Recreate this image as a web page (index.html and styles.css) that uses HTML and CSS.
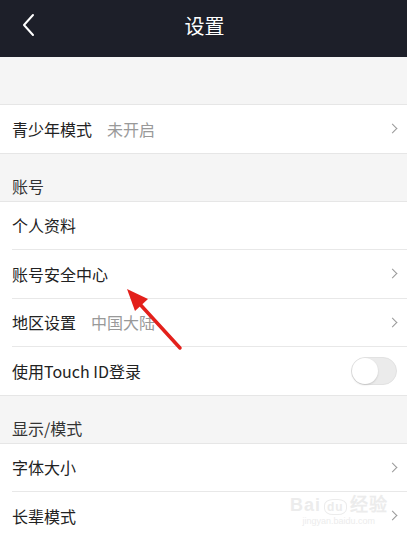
FILE: index.html
```html
<!DOCTYPE html>
<html lang="zh-CN">
<head>
	<meta charset="UTF-8" />
	<meta name="viewport" content="width=device-width, initial-scale=1" />
	<title>设置</title>
	<link rel="stylesheet" href="styles.css">
</head>
<body>
	<div class="page">
		<div class="header">
			<svg class="back" width="14" height="24" viewBox="0 0 14 24">
				<path d="M11 2 L2 12 L11 22" fill="none" stroke="#fff" stroke-width="2" stroke-linecap="round" stroke-linejoin="round" />
			</svg>
			<div class="header_title">设置</div>
		</div>

		<div class="gap"></div>

		<div class="group">
			<div class="row">
				<div class="row_label">青少年模式</div>
				<div class="row_value">未开启</div>
				<span class="chevron"></span>
			</div>
		</div>

		<div class="section">账号</div>
		<div class="group">
			<div class="row">
				<div class="row_label">个人资料</div>
			</div>
			<div class="row">
				<div class="row_label">账号安全中心</div>
				<span class="chevron"></span>
			</div>
			<div class="row">
				<div class="row_label">地区设置</div>
				<div class="row_value">中国大陆</div>
				<span class="chevron"></span>
			</div>
			<div class="row">
				<div class="row_label">使用Touch ID登录</div>
				<span class="switch"><span class="knob"></span></span>
			</div>
		</div>

		<div class="section">显示/模式</div>
		<div class="group">
			<div class="row">
				<div class="row_label">字体大小</div>
				<span class="chevron"></span>
			</div>
			<div class="row">
				<div class="row_label">长辈模式</div>
				<span class="chevron"></span>
			</div>
		</div>

		<!-- annotation arrow drawn over the screenshot -->
		<svg class="arrow" width="407" height="540" viewBox="0 0 407 540">
			<line x1="180" y1="348" x2="137" y2="301" stroke="#e3201b" stroke-width="3.5" stroke-linecap="round" />
			<polygon points="127,289 148,299 135,311" fill="#e3201b" />
		</svg>

		<div class="watermark">
			<div class="wm_logo">Bai<span class="wm_du">du</span>经验</div>
			<div class="wm_url">jingyan.baidu.com</div>
		</div>
	</div>
</body>
</html>
```

FILE: styles.css
```css
body{
	margin: 0;
	font-family: "Noto Sans CJK SC", "Noto Sans", sans-serif;
	background-color: #f5f5f5;
}

.page{
	position: relative;
	width: 407px;
	height: 540px;
	overflow: hidden;
}

.header{
	height: 57px;
	background-color: #1d1f29;
	display: flex;
	align-items: center;
	justify-content: center;
	position: relative;
}

.back{
	position: absolute;
	left: 22px;
	top: 13px;
}

.header_title{
	color: #fff;
	font-size: 20px;
	margin-top: -6px;
	margin-left: 2px;
}

.gap{
	height: 47px;
}

.group{
	background-color: #fff;
	border-top: 1px solid #e6e6e6;
	border-bottom: 1px solid #e6e6e6;
}

.row{
	box-sizing: border-box;
	height: 48.5px;
	margin-left: 12px;
	padding-right: 11px;
	display: flex;
	align-items: center;
	border-bottom: 1px solid #e8e8e8;
	font-size: 16px;
	color: #222;
}

.row:last-child{
	border-bottom: none;
	height: 47.5px;
}

.row_value{
	color: #999;
	margin-left: 15px;
}

.chevron{
	margin-left: auto;
	width: 6px;
	height: 6px;
	border-top: 1.5px solid #999;
	border-right: 1.5px solid #999;
	transform: rotate(45deg);
}

.switch{
	margin-left: auto;
	margin-right: -1px;
	width: 46px;
	height: 28px;
	box-sizing: border-box;
	border-radius: 14px;
	background-color: #ebebeb;
	border: 1px solid #e2e2e2;
	position: relative;
}

.knob{
	position: absolute;
	left: 0;
	top: 0;
	width: 26px;
	height: 26px;
	border-radius: 50%;
	background-color: #fff;
	box-shadow: 0 1px 2px rgba(0,0,0,0.15);
}

.section{
	box-sizing: border-box;
	height: 47px;
	padding: 0 12px 3px;
	display: flex;
	align-items: flex-end;
	font-size: 16px;
	color: #333;
}

.arrow{
	position: absolute;
	left: 0;
	top: 0;
}

.watermark{
	position: absolute;
	left: 290px;
	top: 490px;
	color: #ececec;
	font-family: "Liberation Sans", sans-serif;
	text-align: center;
}

.wm_logo{
	font-size: 18px;
	font-weight: bold;
	letter-spacing: 1px;
}

.wm_du{
	font-size: 12px;
	border: 1px solid #ececec;
	border-radius: 40%;
	padding: 0 2px;
	margin: 0 3px;
}

.wm_url{
	font-size: 9px;
}
```
